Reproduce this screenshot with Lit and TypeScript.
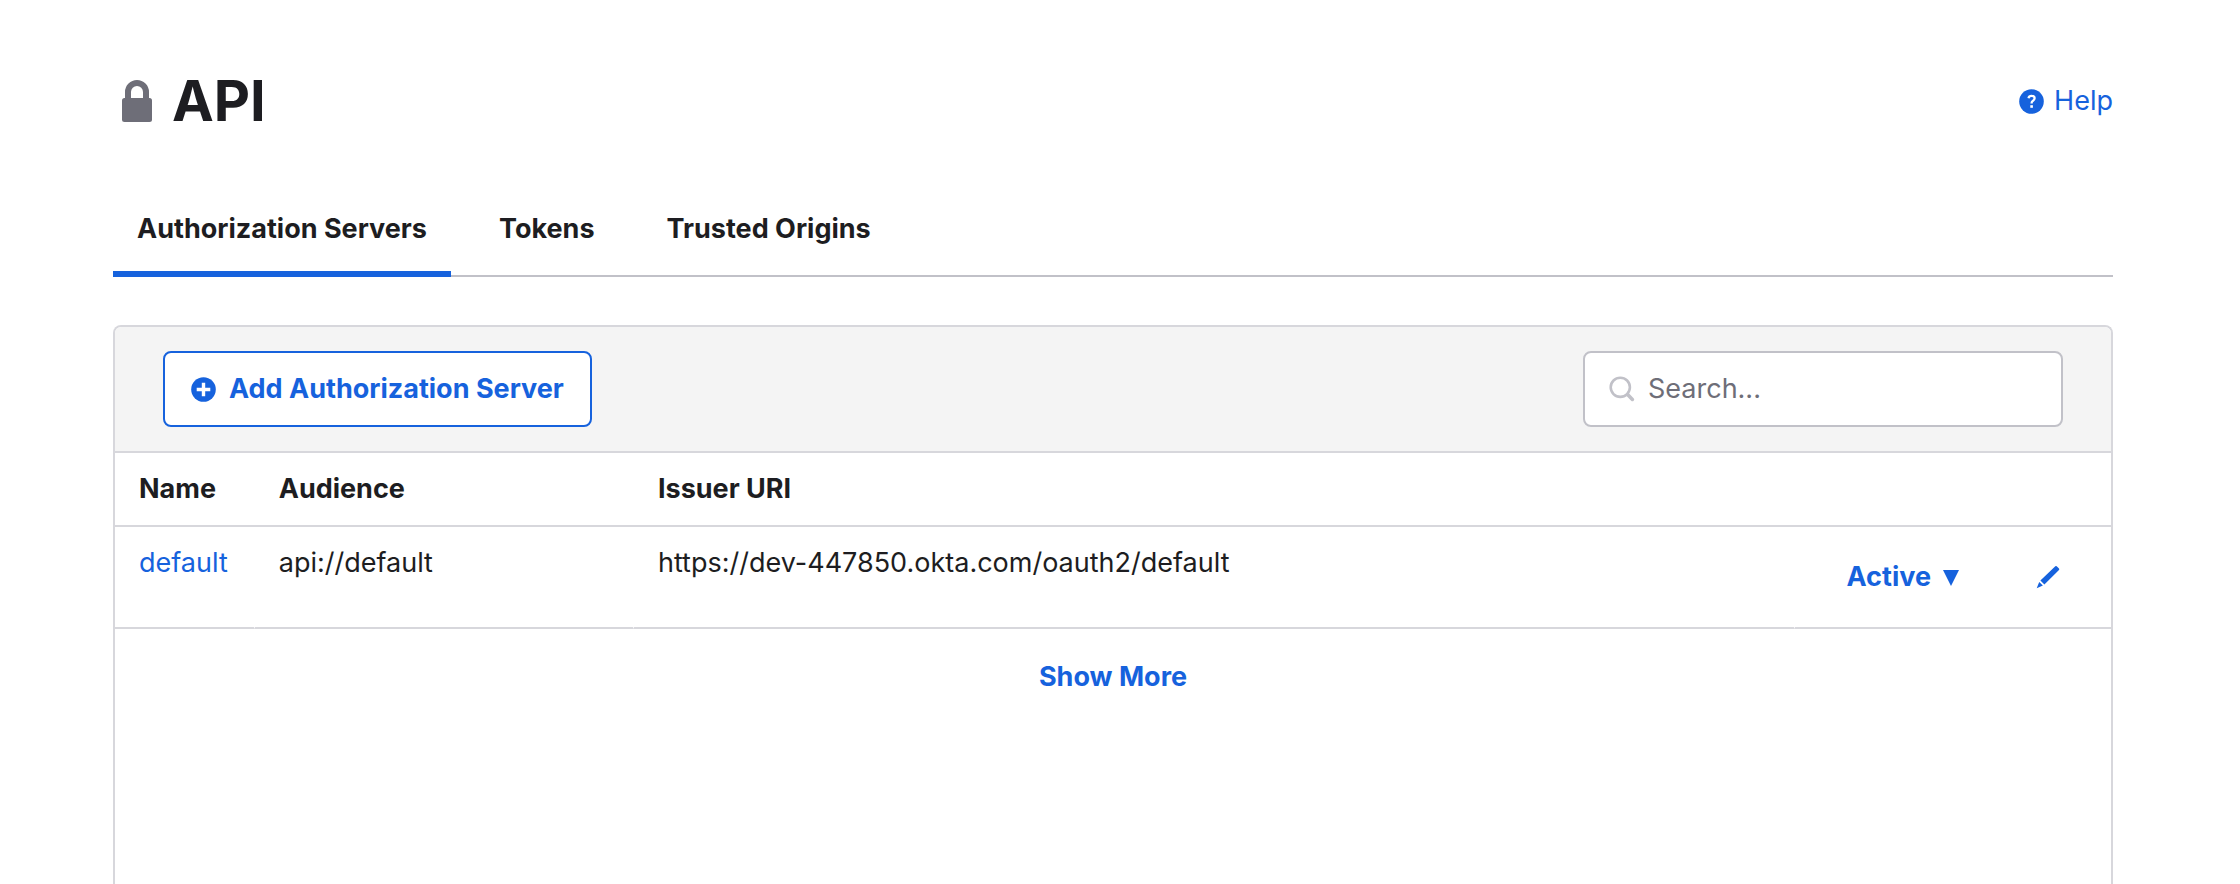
import { LitElement, html, css } from "lit";
import { customElement, state } from "lit/decorators.js";
import { classMap } from "lit/directives/class-map.js";

interface AuthServer {
  name: string;
  audience: string;
  issuer: string;
  status: string;
}

const TABS = ["Authorization Servers", "Tokens", "Trusted Origins"];

const SERVERS: AuthServer[] = [
  {
    name: "default",
    audience: "api://default",
    issuer: "https://dev-447850.okta.com/oauth2/default",
    status: "Active",
  },
];

@customElement("app-root")
export class AppRoot extends LitElement {
  static styles = css`
    :host {
      --blue: #1662dd;
      --ink: #1d1d21;
      --muted: #6e6e78;
      --line: #d7d7dc;
      --line-strong: #c1c1c8;
      box-sizing: border-box;
      display: flex;
      flex-direction: column;
      min-height: 100vh;
      padding: 69px 127px 0 113px;
      background: #fff;
      color: var(--ink);
      font: 400 27px/36px Inter, "Liberation Sans", sans-serif;
    }
    svg {
      display: block;
      flex: none;
    }
    a {
      color: var(--blue);
      text-decoration: none;
    }
    button {
      font: inherit;
      margin: 0;
      padding: 0;
      border: 0;
      background: none;
      color: var(--blue);
      cursor: pointer;
    }
    .strong,
    button.strong {
      font-weight: 700;
    }
    .header {
      display: flex;
      align-items: center;
      justify-content: space-between;
    }
    .title {
      display: flex;
      align-items: center;
      gap: 20px;
      margin: 0;
      padding-left: 9px;
      font-size: 56px;
      line-height: 64px;
      font-weight: 700;
    }
    .lock {
      color: var(--muted);
    }
    .help {
      display: flex;
      align-items: center;
      gap: 10px;
    }
    .tabs {
      display: flex;
      gap: 24px;
      margin-top: 54px;
      border-bottom: 2px solid var(--line-strong);
    }
    .tabs .tab {
      margin-bottom: -2px;
      padding: 24px;
      border-bottom: 6px solid transparent;
      color: var(--ink);
      line-height: 36px;
    }
    .tabs .selected {
      border-bottom-color: var(--blue);
    }
    .panel {
      flex: 1;
      margin-top: 48px;
      border: 2px solid var(--line);
      border-bottom: 0;
      border-radius: 8px 8px 0 0;
    }
    .toolbar {
      display: flex;
      align-items: center;
      justify-content: space-between;
      padding: 24px 48px;
      border-bottom: 2px solid var(--line);
      border-radius: 6px 6px 0 0;
      background: #f4f4f4;
    }
    .toolbar .add {
      display: flex;
      align-items: center;
      gap: 13px;
      padding: 18px 26px;
      border: 2px solid var(--blue);
      border-radius: 8px;
      background: #fff;
      line-height: 36px;
    }
    .search {
      box-sizing: border-box;
      display: flex;
      align-items: center;
      gap: 13px;
      width: 480px;
      padding: 18px 24px;
      border: 2px solid var(--line-strong);
      border-radius: 8px;
      background: #fff;
      color: var(--line-strong);
    }
    .search-input {
      flex: 1;
      min-width: 0;
      height: 36px;
      padding: 0;
      border: 0;
      outline: 0;
      background: none;
      color: var(--ink);
      font: inherit;
    }
    .search-input::placeholder {
      color: var(--muted);
      opacity: 1;
    }
    .servers {
      width: 100%;
      border-collapse: separate;
      border-spacing: 0;
      table-layout: fixed;
    }
    .col-name {
      width: 7%;
    }
    .col-audience {
      width: 19%;
    }
    .col-actions {
      width: 316px;
    }
    .servers th,
    .servers td {
      padding: 18px 0 18px 24px;
      border-bottom: 2px solid var(--line);
      text-align: left;
      vertical-align: top;
      white-space: nowrap;
    }
    .servers td:not(:last-child) {
      border-right: 1px solid #fff;
    }
    .actions {
      display: flex;
      align-items: center;
      justify-content: flex-end;
      gap: 76px;
      min-height: 64px;
      padding-right: 48px;
    }
    .status {
      display: flex;
      align-items: center;
      gap: 12px;
    }
    .more {
      display: flex;
      justify-content: center;
      padding: 30px 0;
    }
    .more .strong {
      line-height: 36px;
    }
  `;

  @state() private tab = TABS[0];

  render() {
    return html`
      <header class="header">
        <h1 class="title">
          <svg class="lock" width="30" height="42" viewBox="0 0 30 42" aria-hidden="true">
            <path d="M6 19V12a9 9 0 0 1 18 0v7" fill="none" stroke="currentColor" stroke-width="6" />
            <rect y="18" width="30" height="24" rx="2.5" fill="currentColor" />
          </svg>
          API
        </h1>
        <a class="help" href="#help">
          <svg width="25" height="25" viewBox="0 0 25 25" aria-hidden="true">
            <circle cx="12.5" cy="12.5" r="12.3" fill="#1662dd" />
            <path
              d="M9.5 9.2c.3-1.5 1.5-2.3 3.1-2.3 1.8 0 3 .9 3 2.4 0 1.2-.7 1.8-1.6 2.4-1 .6-1.4 1.1-1.4 2.3v.6"
              fill="none"
              stroke="#fff"
              stroke-width="2.3"
            />
            <rect x="11.3" y="16.2" width="2.6" height="2.6" fill="#fff" />
          </svg>
          Help
        </a>
      </header>

      <nav class="tabs" role="tablist" aria-label="API sections">
        ${TABS.map(
          (label) => html`
            <button
              type="button"
              role="tab"
              class=${classMap({ tab: true, strong: true, selected: label === this.tab })}
              aria-selected=${label === this.tab}
              @click=${() => (this.tab = label)}
            >${label}</button>
          `
        )}
      </nav>

      <section class="panel">
        <div class="toolbar">
          <button type="button" class="add strong">
            <svg width="25" height="25" viewBox="0 0 25 25" aria-hidden="true">
              <circle cx="12.5" cy="12.5" r="12.3" fill="currentColor" />
              <path d="M12.5 5.7v13.6M5.7 12.5h13.6" stroke="#fff" stroke-width="3.4" />
            </svg>
            Add Authorization Server
          </button>
          <label class="search">
            <svg width="26" height="26" viewBox="0 0 26 26" aria-hidden="true">
              <circle cx="11.3" cy="11.3" r="9.6" fill="none" stroke="currentColor" stroke-width="2.6" />
              <path d="M18.6 18.6l4.8 4.8" stroke="currentColor" stroke-width="3.6" stroke-linecap="round" />
            </svg>
            <input class="search-input" type="text" placeholder="Search..." aria-label="Search" />
          </label>
        </div>

        <table class="servers">
          <colgroup>
            <col class="col-name" />
            <col class="col-audience" />
            <col />
            <col class="col-actions" />
          </colgroup>
          <thead>
            <tr>
              <th class="strong" scope="col">Name</th>
              <th class="strong" scope="col">Audience</th>
              <th class="strong" scope="col">Issuer URI</th>
              <th class="strong" scope="col" aria-label="Actions"></th>
            </tr>
          </thead>
          <tbody>
            ${SERVERS.map(
              (server) => html`
                <tr>
                  <td><a href="#server">${server.name}</a></td>
                  <td>${server.audience}</td>
                  <td>${server.issuer}</td>
                  <td>
                    <div class="actions">
                      <button type="button" class="status strong" aria-haspopup="menu">
                        ${server.status}
                        <svg width="16" height="17" viewBox="0 0 16 17" aria-hidden="true">
                          <path d="M0 1h16L8 17z" fill="currentColor" />
                        </svg>
                      </button>
                      <button type="button" aria-label="Edit">
                        <svg width="28" height="28" viewBox="0 0 28 28" aria-hidden="true">
                          <path
                            d="M20.3 3.2q.7-.6 1.4 0l2.3 2.3q.6.7 0 1.4L9.4 21.5l-4-4zM4.2 18.9l3.7 3.7-6.2 2.7z"
                            fill="currentColor"
                          />
                        </svg>
                      </button>
                    </div>
                  </td>
                </tr>
              `
            )}
          </tbody>
        </table>

        <div class="more">
          <button type="button" class="strong">Show More</button>
        </div>
      </section>
    `;
  }
}
